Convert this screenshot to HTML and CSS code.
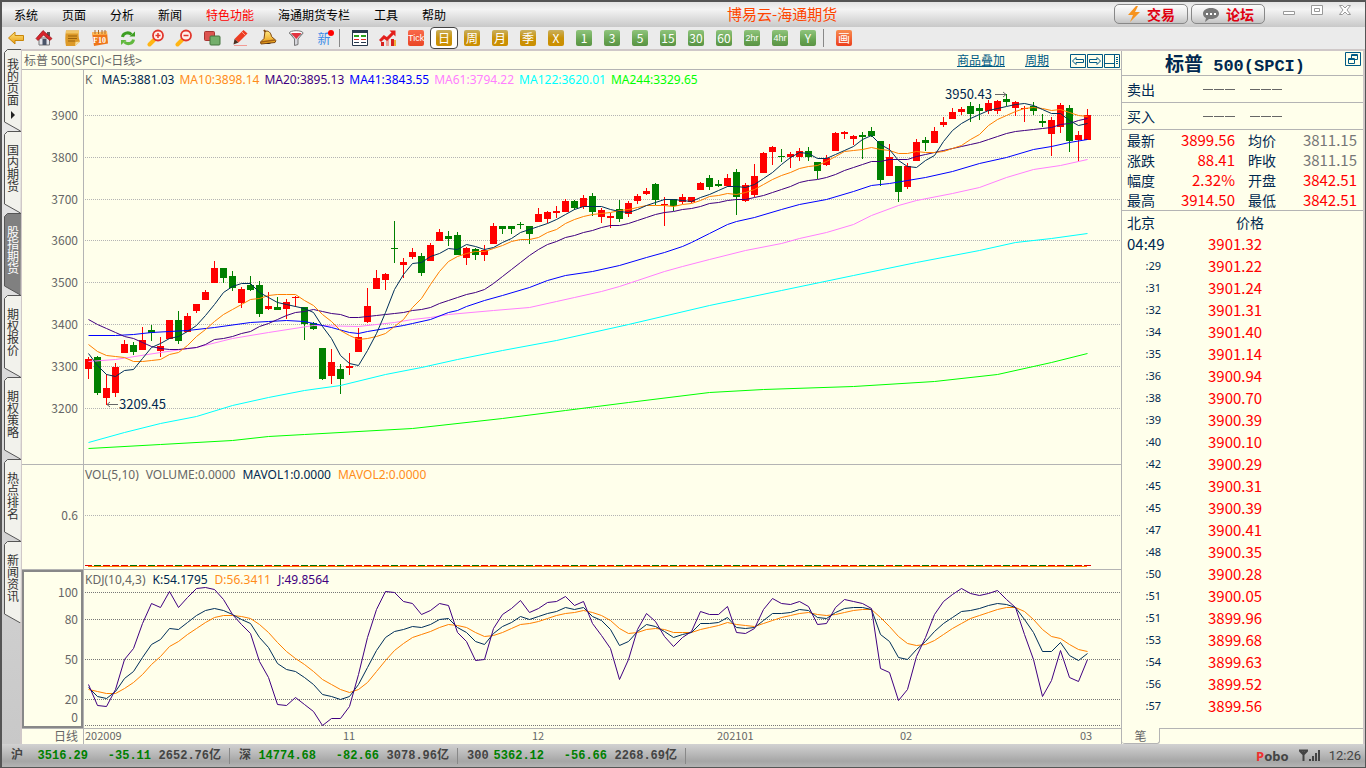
FILE: index.html
```html
<!DOCTYPE html>
<html lang="zh-CN">
<head>
<meta charset="utf-8">
<title>博易云-海通期货</title>
<link rel="stylesheet" href="styles.css">
</head>
<body>
<svg class="defs" aria-hidden="true">
  <defs>
    <linearGradient id="gold" x1="0" y1="0" x2="0" y2="1"><stop offset="0" stop-color="#ffe680"/><stop offset="1" stop-color="#e8990c"/></linearGradient>
    <symbol id="tab" viewBox="0 0 17 82"><path d="M17 .5H3.500L.5 3.500V73L16.500 82"/></symbol>
  </defs>
</svg>
<div class="app">
  <header class="menubar">
    <nav class="menus">
      <button>系统</button><button>页面</button><button>分析</button><button>新闻</button><button class="hot">特色功能</button><button>海通期货专栏</button><button>工具</button><button>帮助</button>
    </nav>
    <h1 class="apptitle">博易云-海通期货</h1>
    <div class="actions">
      <button class="pill"><svg width="14" height="16" viewBox="0 0 14 16"><path d="M9 0 1 9h5l-3 7 10-10H8l3-6z" fill="#f7931e"/></svg>交易</button>
      <button class="pill"><svg width="18" height="15" viewBox="0 0 18 15"><path d="M9 1c5 0 8 2.500 8 5.500S14 12 9 12l-2 0-4 3 1-4C2 10 1 8.500 1 6.500 1 3.500 4 1 9 1z" fill="#777"/><path d="M4 6h2v2H4zM8 6h2v2H8zM12 6h2v2h-2z" fill="#fff"/></svg>论坛</button>
    </div>
    <div class="winctl">
      <button aria-label="最小化"><svg width="14" height="12"><path d="M1.500 7.500h11v3h-11z" fill="#fff" stroke="#999"/></svg></button>
      <button aria-label="最大化"><svg width="14" height="12"><path d="M1.500 1.500h11v9h-11zM4.500 4.500h5v3h-5z" fill="#fff" stroke="#999"/></svg></button>
      <button aria-label="关闭"><svg width="14" height="12"><path d="M1.500 1.500h3L7 4l2.500-2.500h3L9 6l3.500 4.500h-3L7 8l-2.500 2.500h-3L5 6z" fill="#fff" stroke="#999"/></svg></button>
    </div>
  </header>

  <div class="toolbar">
    <button aria-label="后退"><svg width="18" height="18" viewBox="0 0 18 18"><path d="M1.500 9 8 3v3.500h8.500v5H8V15z" fill="url(#gold)" stroke="#c8860a"/></svg></button>
    <button aria-label="首页"><svg width="18" height="18" viewBox="0 0 18 18"><path d="M4 9h10.500v7H4z" fill="#e4e4ea" stroke="#777"/><path d="M7.500 10h4v6h-4z" fill="#4a5468"/><path d="M12 3h3v4h-3z" fill="#555"/><path d="M1 9.500 8 1.500l9 8-2 2L8.500 6 3 11.500z" fill="#d8242c" stroke="#8d1016" stroke-width=".7"/></svg></button>
    <button aria-label="便签"><svg width="18" height="18" viewBox="0 0 18 18"><path d="M3 1.500h13c-1 4 0 9 1 11L12 17H3c-1-4-1-10 0-15.500z" fill="#dd9a28"/><path d="M3 1.500h13v3H3z" fill="#f1c566"/><path d="M5 7h9M5 9.500h9M5 12h7" stroke="#9a620c"/><path d="m12 17 .5-4 4.500-.5z" fill="#f7dc96"/></svg></button>
    <button aria-label="F10"><svg width="18" height="18" viewBox="0 0 18 18"><path d="M1 3.500 16 2.500l1 12L3 17z" fill="#ef7519"/><path d="M1 3.500 16 2.500v3L1.500 6z" fill="#ffbc58"/><path d="M4 1v4M7.500 1v4M11 1v4M14 1v4" stroke="#a76b30"/><text x="2" y="14" class="f10">F10</text></svg></button>
    <button aria-label="刷新"><svg width="18" height="18" viewBox="0 0 18 18"><path d="M3.500 8c.5-4 6-5.500 9-2.500" fill="none" stroke="#3d9e22" stroke-width="3"/><path d="M10.500 7.500H16V2.500z" fill="#3d9e22"/><path d="M14.500 10.500c-.5 4-6 5.500-9 2.500" fill="none" stroke="#62b93f" stroke-width="3"/><path d="M7.500 11H2v5z" fill="#62b93f"/></svg></button>
    <button aria-label="放大"><svg width="18" height="18" viewBox="0 0 18 18"><path d="m7 11-4.500 4.500" stroke="#ffb514" stroke-width="4" stroke-linecap="round"/><circle cx="11" cy="6.500" r="5" fill="#fff0ec" stroke="#e2362c" stroke-width="1.800"/><path d="M8.500 6.500h5M11 4v5" stroke="#e2362c" stroke-width="1.500"/></svg></button>
    <button aria-label="缩小"><svg width="18" height="18" viewBox="0 0 18 18"><path d="m7 11-4.500 4.500" stroke="#ffb514" stroke-width="4" stroke-linecap="round"/><circle cx="11" cy="6.500" r="5" fill="#fff0ec" stroke="#e2362c" stroke-width="1.800"/><path d="M8.500 6.500h5" stroke="#e2362c" stroke-width="1.500"/></svg></button>
    <button aria-label="叠加"><svg width="18" height="18" viewBox="0 0 18 18"><rect x="1.500" y="2.500" width="10" height="9" rx="1" fill="#dc5450" stroke="#a83432"/><rect x="7" y="7" width="10" height="9" rx="1" fill="#73ae6b" stroke="#45753f"/></svg></button>
    <button aria-label="画笔"><svg width="18" height="18" viewBox="0 0 18 18"><path d="M12.500 1 16.500 4.500 7.500 13.500l-4-3.500z" fill="#ed3d23"/><path d="m3.500 10 4 3.500-5 2z" fill="#4a3020"/><path d="m11 3 3.500 3.500" stroke="#ff9d86"/><path d="M3 16.500h13" stroke="#f29a94"/></svg></button>
    <button aria-label="预警"><svg width="18" height="18" viewBox="0 0 18 18"><path d="M6 2.500c3-1.500 6 1 6.500 5l4.500 4-1 2L2 15l-.5-2L5 9.500z" fill="url(#gold)" stroke="#80480e"/><path d="M7 14a3 2.500 0 0 0 5 0z" fill="#3e2a20"/><path d="M6.500 3 5 1" stroke="#80480e" stroke-width="2"/><path d="m2 13 14-2" stroke="#a35f14" stroke-width="1.500"/></svg></button>
    <button aria-label="筛选"><svg width="18" height="18" viewBox="0 0 18 18"><path d="m2.500 4 5 6v6.500l3.500-1V10l5-6z" fill="#d6d6dc" stroke="#777"/><ellipse cx="9.200" cy="4" rx="6.800" ry="2.300" fill="#fff" stroke="#777"/><path d="M4 4h10.500l-5.200 6z" fill="#e43440"/></svg></button>
    <button class="new">新<i></i></button>
    <span class="sep"></span>
    <button aria-label="报价表"><svg width="18" height="18" viewBox="0 0 18 18"><path d="M1.500 1.500h15v15h-15z" fill="#fff" stroke="#26384c"/><path d="M1 1h16v3H1z" fill="#26384c"/><path d="M3 7h5m2 0h5" stroke="#2aa11c" stroke-width="2"/><path d="M3 10.500h5m2 0h5" stroke="#e62626"/><path d="M3 13.500h5m2 0h5" stroke="#26384c"/></svg></button>
    <button aria-label="走势"><svg width="18" height="18" viewBox="0 0 18 18"><path d="M2 13h3v4H2zM12 10h3v7h-3z" fill="#d6221e"/><path d="M7 11h3v6H7z" fill="#eda29a"/><path d="M15 11h2v6h-2z" fill="#ecb13b"/><path d="m1 12 4-4 3 2 6-6" fill="none" stroke="#e3201d" stroke-width="3"/><path d="M10.500 1.500H16.500v6z" fill="#e3201d"/></svg></button>
    <button><b class="ic tick">Tick</b></button>
    <button class="on"><b class="ic gold">日</b></button>
    <button><b class="ic gold">周</b></button>
    <button><b class="ic gold">月</b></button>
    <button><b class="ic gold">季</b></button>
    <button><b class="ic gold">X</b></button>
    <button><b class="ic green">1</b></button>
    <button><b class="ic green">3</b></button>
    <button><b class="ic green">5</b></button>
    <button><b class="ic green">15</b></button>
    <button><b class="ic green">30</b></button>
    <button><b class="ic green">60</b></button>
    <button><b class="ic green hr">2hr</b></button>
    <button><b class="ic green hr">4hr</b></button>
    <button><b class="ic green">Y</b></button>
    <span class="sep"></span>
    <button><b class="ic draw">画</b></button>
  </div>

  <div class="body">
    <nav class="sidetabs">
      <button class="first"><svg><use href="#tab"/></svg><span>我的页面</span><i></i></button>
      <button><svg><use href="#tab"/></svg><span>国内期货</span></button>
      <button class="on"><svg><use href="#tab"/></svg><span>股指期货</span></button>
      <button><svg><use href="#tab"/></svg><span>期权报价</span></button>
      <button><svg><use href="#tab"/></svg><span>期权策略</span></button>
      <button><svg><use href="#tab"/></svg><span>热点排名</span></button>
      <button><svg><use href="#tab"/></svg><span>新闻资讯</span></button>
    </nav>

    <main class="chart">
      <div class="charthead">
        <span>标普 500(SPCI)&lt;日线&gt;</span>
        <div class="links">
          <a href="#overlay">商品叠加</a>
          <a href="#period">周期</a>
          <div class="boxes">
            <button aria-label="向左"><svg width="16" height="14"><path d="M.5.500h15v13H.5zM2.500 7 6 3.500v2h7.500v3H6v2z"/></svg></button>
            <button aria-label="向右"><svg width="16" height="14"><path d="M.5.500h15v13H.5zM13.500 7 10 3.500v2H2.500v3H10v2z"/></svg></button>
            <button aria-label="布局"><svg width="16" height="14"><path d="M.5.500h15v13H.5zM10.500 1v12M1 9.500h9M12 3.500h2M12 5.500h2M12 7.500h2M12 9.500h2"/></svg></button>
          </div>
        </div>
      </div>
      <section class="pane price">
        <svg class="axis" id="axis-price"></svg>
        <div class="plot">
          <svg id="plot-price"></svg>
          <p class="legend"><span class="k">K</span><span class="c5">MA5:3881.03</span><span class="c10">MA10:3898.14</span><span class="c20">MA20:3895.13</span><span class="c41">MA41:3843.55</span><span class="c61">MA61:3794.22</span><span class="c122">MA122:3620.01</span><span class="c244">MA244:3329.65</span></p>
        </div>
      </section>
      <section class="pane vol">
        <svg class="axis" id="axis-vol"></svg>
        <div class="plot">
          <svg id="plot-vol"></svg>
          <p class="legend"><span>VOL(5,10)</span><span>VOLUME:0.0000</span><span class="c5">MAVOL1:0.0000</span><span class="c10">MAVOL2:0.0000</span></p>
        </div>
      </section>
      <section class="pane kdj">
        <svg class="axis" id="axis-kdj"></svg>
        <div class="plot">
          <svg id="plot-kdj"></svg>
          <p class="legend"><span>KDJ(10,4,3)</span><span class="c5">K:54.1795</span><span class="c10">D:56.3411</span><span class="c20">J:49.8564</span></p>
        </div>
      </section>
      <div class="dates">
        <span>日线</span>
        <svg id="plot-dates"></svg>
      </div>
    </main>

    <aside class="quote">
      <div class="qtitle"><h2>标普<span>&nbsp;500(SPCI)</span></h2>
        <button aria-label="弹出窗口"><svg width="16" height="14"><path d="M.5.500h15v13H.5zM6.500 2.500h6v5h-6zM7 3.500h5M3.500 6.500h6v5h-6zM4 7.500h5"/></svg></button></div>
      <div class="bidask"><span>卖出</span><i></i><i></i></div>
      <div class="bidask"><span>买入</span><i></i><i></i></div>
      <table class="stats">
        <tr><th>最新</th><td class="up">3899.56</td><th>均价</th><td>3811.15</td></tr>
        <tr><th>涨跌</th><td class="up">88.41</td><th>昨收</th><td>3811.15</td></tr>
        <tr><th>幅度</th><td class="up">2.32%</td><th>开盘</th><td class="up">3842.51</td></tr>
        <tr><th>最高</th><td class="up">3914.50</td><th>最低</th><td class="up">3842.51</td></tr>
      </table>
      <table class="ticks">
        <thead><tr><th>北京</th><th>价格</th></tr></thead>
        <tbody>
        <tr><td class="full">04:49</td><td>3901.32</td></tr>
        <tr><td>:29</td><td>3901.22</td></tr>
        <tr><td>:31</td><td>3901.24</td></tr>
        <tr><td>:32</td><td>3901.31</td></tr>
        <tr><td>:34</td><td>3901.40</td></tr>
        <tr><td>:35</td><td>3901.14</td></tr>
        <tr><td>:36</td><td>3900.94</td></tr>
        <tr><td>:38</td><td>3900.70</td></tr>
        <tr><td>:39</td><td>3900.39</td></tr>
        <tr><td>:40</td><td>3900.10</td></tr>
        <tr><td>:42</td><td>3900.29</td></tr>
        <tr><td>:45</td><td>3900.31</td></tr>
        <tr><td>:45</td><td>3900.39</td></tr>
        <tr><td>:47</td><td>3900.41</td></tr>
        <tr><td>:48</td><td>3900.35</td></tr>
        <tr><td>:50</td><td>3900.28</td></tr>
        <tr><td>:51</td><td>3900.05</td></tr>
        <tr><td>:51</td><td>3899.96</td></tr>
        <tr><td>:53</td><td>3899.68</td></tr>
        <tr><td>:54</td><td>3899.63</td></tr>
        <tr><td>:56</td><td>3899.52</td></tr>
        <tr><td>:57</td><td>3899.56</td></tr>
        </tbody>
      </table>
      <div class="qtabs"><button>笔</button><div></div></div>
    </aside>
  </div>

  <footer class="status">
    <div class="idx"><span>沪</span><b>3516.29</b><b class="chg">-35.11</b><span class="amt">2652.76亿</span></div>
    <div class="idx"><span>深</span><b>14774.68</b><b class="chg">-82.66</b><span class="amt">3078.96亿</span></div>
    <div class="idx"><span>300</span><b>5362.12</b><b class="chg">-56.66</b><span class="amt">2268.69亿</span></div>
    <div class="right">
      <span class="brand"><em>P</em>obo</span>
      <svg width="22" height="14" viewBox="0 0 22 14"><path d="M1 1.500h9M2 2l3.500 3.500L9 2M5.500 2v10" fill="none" stroke="#444" stroke-width="2"/><path d="M11 10h2v2h-2zM14 7h2v5h-2zM17 4h2v8h-2zM20 1h2v11h-2z" fill="#444"/></svg>
      <time>12:26</time>
    </div>
  </footer>
</div>
<script src="chart.js"></script>
</body>
</html>
```

FILE: styles.css
```css
* { box-sizing: border-box; }
body {
  margin: 0;
  font: 12px/16px "Noto Sans CJK SC", sans-serif;
  color: #666;
  background: #ebebeb;
}
button { border: 0; padding: 0; background: none; font: inherit; color: inherit; }
p, h1, h2 { margin: 0; font-weight: normal; }
i, em { font-style: normal; }
svg { display: block; }
.defs { position: absolute; width: 0; height: 0; }

.app {
  display: flex;
  flex-direction: column;
  min-height: 100vh;
  border: 2px solid #555;
  border-width: 2px 1px 1px 2px;
}

/* menu bar */
.menubar {
  display: flex;
  height: 25px;
  background: linear-gradient(#e4e4e4, #f4f4f4 30%, #c8c8c8);
}
.menus { display: flex; color: #000; }
.menus button { padding: 0 12px; }
.menus .hot { color: #f00; }
.apptitle { flex: 1; padding-right: 8px; text-align: center; font-size: 15px; line-height: 24px; color: #ff4500; }
.actions { display: flex; gap: 3px; padding-top: 2px; }
.pill {
  display: flex;
  align-items: center;
  justify-content: center;
  gap: 6px;
  width: 74px;
  height: 20px;
  border: 1px solid #888;
  border-radius: 5px;
  background: linear-gradient(#fdfdfd, #e8e8e8 50%, #c4c4c4);
  font-size: 14px;
  line-height: 18px;
  font-weight: bold;
  color: #e00010;
}
.winctl { display: flex; gap: 14px; padding: 2px 13px 0 17px; align-items: flex-start; }

/* toolbar */
.toolbar {
  display: flex;
  height: 24px;
  background: #ebebeb;
  border-bottom: 2px solid #cfc8c8;
}
.toolbar button { display: flex; align-items: center; justify-content: center; width: 28px; height: 22px; }
.toolbar button.on { background: #fff; border: 1px solid #444; border-radius: 4px; }
.sep { width: 7px; margin: 2px 0 2px 1px; border-left: 1px solid #888; }
.toolbar .new { position: relative; font-size: 13px; color: #3d8de8; }
.new i { position: absolute; right: 4px; top: 3px; width: 6px; height: 6px; border-radius: 3px; background: #f00; }
.ic {
  width: 16px;
  height: 16px;
  border-radius: 2px;
  overflow: hidden;
  font-size: 12px;
  line-height: 16px;
  font-weight: normal;
  text-align: center;
  color: #fff;
}
.ic.gold { background: linear-gradient(#c9b060, #c99208 50%, #cc8f00); }
.ic.green { background: linear-gradient(#8fc47c, #68a552 60%, #5a9344); font-size: 12px; }
.ic.green.hr { font: 9px/16px "Liberation Sans", sans-serif; }
.ic.tick { background: linear-gradient(#f9694a, #ea4524); font: 9px/16px "Liberation Sans", sans-serif; }
.ic.draw { background: linear-gradient(#f88d50, #ec3f1c); }

/* body */
.body { flex: 1; display: flex; }
.sidetabs { flex: none; width: 18px; padding-left: 2px; margin-top: -2px; background: linear-gradient(#ebebeb, #c8c8c8); }
.sidetabs button {
  position: relative;
  display: flex;
  flex-direction: column;
  align-items: center;
  width: 16px;
  height: 82px;
  padding: 13px 0 0 2px;
  color: #333;
}
.sidetabs .first { padding-top: 9px; }
.sidetabs svg { position: absolute; left: 0; top: 0; width: 17px; height: 82px; fill: #f2f2ec; stroke: #555; }
.sidetabs span { position: relative; width: 12px; line-height: 12px; word-break: break-all; }
.sidetabs i { position: relative; margin-top: 5px; border: 4px solid transparent; border-left-color: #222; border-right: 0; }
.sidetabs .on { color: #fff; }
.sidetabs .on svg { fill: #808080; }

.chart {
  flex: 1;
  min-width: 0;
  display: flex;
  flex-direction: column;
  background: #ffffeb;
  border-left: 2px solid #cfc8c8;
  border-right: 1px solid #b4b4b4;
}
.charthead {
  display: flex;
  justify-content: space-between;
  height: 19px;
  padding: 0 1px 0 2px;
  line-height: 18px;
  border-bottom: 1px solid #b4b4b4;
}
.links { display: flex; gap: 20px; }
.links a { color: #005a84; }
.boxes { display: flex; gap: 1px; margin-left: 1px; padding-top: 1px; }
.boxes svg, .qtitle svg { fill: none; stroke: #005a84; }

.pane { display: flex; min-height: 0; overflow: hidden; border-bottom: 1px solid #b4b4b4; }
.price { flex: 1 1 0; }
.vol { flex: none; height: 105px; }
.kdj { flex: none; height: 159px; }
.axis { flex: none; width: 61px; }
.vol .axis, .kdj .axis { height: auto; }
.kdj .axis { border: 2px solid #888; }
.plot { position: relative; flex: 1; min-width: 0; border-left: 1px solid #b4b4b4; }
.plot svg { position: absolute; width: 100%; height: 100%; }
.legend { position: relative; display: flex; gap: 5px; padding: 2px 1px; font: 12px/16px "Noto Sans", sans-serif; }
.legend .k { margin-right: 4px; }
.vol .legend, .kdj .legend { gap: 7px; }
.c5 { color: #002850; }
.c10 { color: #ff8c1a; }
.c20 { color: #400080; }
.c41 { color: #00f; }
.c61 { color: #ff80ff; }
.c122 { color: #0ff; }
.c244 { color: #0f0; }
svg text { font-size: 12px; fill: #666; }
svg text.f10 { font: bold 8px "Liberation Serif", serif; fill: #fff; }
svg text.mark { font-size: 13px; fill: #002850; }
svg text.date { font-size: 11px; }
.dates { display: flex; height: 15px; line-height: 14px; }
.dates span { width: 62px; padding-right: 5px; text-align: right; border-right: 1px solid #b4b4b4; }
.dates svg { flex: 1; min-width: 0; height: 15px; overflow: visible; }

/* quote panel */
.quote {
  flex: none;
  width: 243px;
  display: flex;
  flex-direction: column;
  background: #ffffeb;
  border-right: 2px solid #cfc8c8;
  color: #002850;
  font-size: 14px;
}
.qtitle { display: flex; align-items: flex-start; height: 25px; border-bottom: 1px solid #b4b4b4; padding-right: 2px; }
.qtitle h2 { flex: 1; padding-left: 3px; text-align: center; font-size: 19px; line-height: 23px; font-weight: bold; color: #002850; }
.qtitle h2 span { font: bold 17px/23px "Liberation Mono", monospace; }
.qtitle button { padding-top: 1px; }
.bidask { display: flex; align-items: center; height: 27px; padding-left: 5px; border-bottom: 1px solid #b4b4b4; }
.bidask span { width: 76px; }
.bidask i { width: 32px; height: 1px; margin-right: 15px; background: repeating-linear-gradient(90deg, #666 0 10px, transparent 10px 11px); }
table { border-collapse: collapse; table-layout: fixed; }
th, td { padding: 0; font-weight: normal; text-align: left; }
.stats { width: 230px; margin-left: 5px; color: #777; }
.stats tr { height: 20px; }
.stats th { width: 28px; color: #002850; }
.stats td { text-align: right; font-size: 15px; }
.stats td:nth-child(2) { width: 80px; }
.stats th:nth-child(3) { width: 41px; padding-left: 13px; }
.stats .up, .ticks td { color: #f00; }
.ticks { width: 100%; border-top: 1px solid #b4b4b4; margin-bottom: 10px; }
.ticks tr { height: 22px; }
.ticks th { padding-left: 5px; color: #002850; }
.ticks th:first-child { width: 56px; }
.ticks th:last-child { padding-left: 58px; }
.ticks td { padding-left: 30px; font-size: 15px; }
.ticks td:first-child { padding: 0 17px 0 0; text-align: right; font: 11px/16px "Noto Sans", sans-serif; color: #002850; }
.ticks td.full:first-child { padding: 0 0 0 5px; text-align: left; font: 15px/16px "Noto Sans CJK SC", sans-serif; }
.qtabs { display: flex; height: 16px; margin-top: auto; color: #666; font-size: 12px; }
.qtabs button { width: 38px; line-height: 14px; border: 1px solid #b4b4b4; border-width: 0 1px 1px 0; border-radius: 0 0 3px 3px; }
.qtabs div { flex: 1; border-top: 1px solid #b4b4b4; }

/* status bar */
.status {
  display: flex;
  align-items: center;
  height: 23px;
  padding-right: 4px;
  background: linear-gradient(#d2d2d2, #a6a6a6 75%, #b4b4b4);
  font: bold 12px/16px "Liberation Mono", "Noto Sans CJK SC", monospace;
  color: #444;
}
.idx { display: flex; width: 228px; padding: 0 8px 0 9px; border-right: 1px solid #888; }
.idx b { flex: 1; text-align: right; color: #008000; }
.idx .chg { flex: none; width: 63px; }
.idx .amt { width: 70px; text-align: right; }
.right { display: flex; align-items: center; gap: 9px; margin-left: auto; font: 13px/16px Roboto, sans-serif; }
.brand { font: bold 13px/16px "Noto Sans", sans-serif; }
.brand em { color: #f03030; }
```

FILE: chart.js
```js
// Each bar: direction (1 up, 0 down), high, body top, body bottom, low
const bars = [
[1,357,359,369,379],[0,356,357,393,395],[1,374,388,398,405],[1,363,367,393,397],[1,340,344,353,353],
[0,342,345,352,355],[1,327,340,350,350],[0,325,330,333,341],[1,337,346,351,357],[1,320,320,339,339],
[0,311,320,341,344],[1,313,316,332,332],[1,304,304,311,313],[1,290,292,300,300],[1,261,268,283,283],
[0,268,268,278,283],[0,271,276,288,291],[1,287,289,303,308],[0,276,285,290,291],[0,281,285,314,317],
[1,292,306,309,310],[0,297,307,310,310],[1,299,302,309,319],[1,296,297,298,307],[0,307,307,324,340],
[0,322,323,329,330],[0,348,348,379,380],[1,349,362,376,384],[0,364,369,379,394],[1,353,366,368,375],
[1,328,337,352,352],[1,288,306,322,323],[1,270,278,289,289],[1,273,274,280,290],[0,221,248,249,263],
[1,258,262,265,278],[1,248,252,257,259],[0,253,256,273,276],[1,243,245,261,261],[1,229,232,241,241],
[0,231,236,239,246],[0,232,235,255,255],[1,247,248,258,265],[0,248,249,255,260],[1,245,250,255,261],
[1,223,226,244,244],[0,226,226,229,234],[0,226,226,229,234],[0,222,224,225,229],[0,226,226,234,244],
[1,208,214,222,222],[1,211,212,219,223],[1,206,211,213,218],[1,199,201,212,212],[0,200,201,208,210],
[1,195,198,207,209],[0,193,196,212,216],[1,208,210,217,223],[1,213,216,218,228],[0,200,209,219,222],
[1,201,203,214,217],[1,194,196,201,204],[1,188,191,194,195],[0,183,184,200,205],[1,197,204,205,226],
[0,199,199,206,211],[1,194,197,202,204],[1,197,197,202,203],[1,182,183,190,190],[0,175,178,187,190],
[0,180,184,186,187],[1,174,178,186,187],[0,169,172,197,215],[1,183,185,201,202],[1,164,176,195,197],
[1,152,153,173,173],[1,146,147,152,165],[0,149,156,157,162],[1,152,154,157,168],[1,148,151,157,161],
[0,147,151,157,161],[0,162,162,171,179],[1,155,158,165,166],[1,132,133,151,151],[1,131,132,134,139],
[1,135,136,139,145],[0,132,135,137,159],[0,127,131,136,137],[0,141,141,180,186],[1,144,157,176,176],
[0,166,166,192,202],[1,163,166,187,189],[1,139,142,161,161],[0,137,140,143,151],[1,127,131,143,143],
[1,117,122,125,127],[1,108,112,119,119],[1,107,109,112,115],[0,102,106,114,122],[0,104,108,111,120],
[1,100,103,111,114],[1,100,101,111,114],[0,94,99,102,106],[1,101,102,108,116],[1,106,108,109,122],
[0,102,106,111,115],[0,114,121,123,127],[1,117,120,134,156],[1,103,105,127,133],[0,105,108,141,152],
[1,131,135,140,161],[1,109,115,140,140]];

const STEP = 9, X0 = 88;
const NAVY = '#002f5a', ORANGE = '#ff8000', PURPLE = '#400080';
const cx = i => X0 + STEP * i;
const rect = (x, y, w, h, c) => `<rect x="${x}" y="${y}" width="${w}" height="${h}" fill="${c}"/>`;
const poly = (pts, c) => `<polyline points="${pts.map(p => (cx(p[0]) + .5) + ',' + (p[1] + .5)).join(' ')}" fill="none" stroke="${c}"/>`;
const grid = (ys, c) => ys.map(y => `<line x1="85" x2="200%" y1="${y + .5}" y2="${y + .5}" stroke="${c}" stroke-dasharray="1 1"/>`).join('');
const put = (id, dx, dy, s) => { document.getElementById(id).innerHTML = `<g transform="translate(${-dx} ${-dy})">${s}</g>`; };
const labels = (rows, x) => rows.map(r => `<text x="${x}" y="${r[1] + 5}" text-anchor="end">${r[0]}</text>`).join('');

// Moving averages: opening values, then the mean of the last n closes
const close = bars.map(b => b[0] ? b[2] : b[3]);
function average(n, head) {
  return close.map((v, i) => {
    if (i < head.length) return [i, head[i]];
    let sum = 0;
    for (let k = i - n + 1; k <= i; k++) sum += close[k];
    return [i, Math.round(sum / n)];
  });
}
const ma5 = average(5, [353,365,374,376]);
const ma10 = average(10, [344,351,355,356,357,361,361,360,359]);
const ma20 = average(20, [319,324,328,332,336,338,342,346,348,349,349,348,347,344,339,338,336,333,331]);
const ma41 = [[0,335],[3,335],[5,334],[7,332],[9,331],[11,330],[14,327],[18,322],[20,321],[22,320],[24,321],[25,323],[27,327],[29,332],[30,333],[31,331],[33,328],[35,325],[36,323],[38,319],[40,312],[41,310],[42,306],[44,300],[46,295],[49,287],[51,280],[53,275],[56,271],[59,265],[62,257],[64,252],[66,246],[67,242],[69,233],[71,224],[72,221],[74,217],[77,209],[79,204],[82,199],[85,191],[87,185],[89,183],[91,180],[93,177],[96,171],[99,163],[102,157],[105,149],[107,146],[109,142],[111,139]];
const ma61 = [[0,361],[3,359],[8,352],[12,347],[16,338],[20,332],[25,325],[30,326],[34,322],[36,319],[38,317],[40,314],[45,310],[49,307],[52,301],[54,297],[57,291],[59,286],[61,280],[64,271],[66,266],[69,259],[73,250],[77,243],[79,238],[82,232],[85,224],[87,215],[90,205],[92,200],[96,193],[99,187],[102,177],[105,169],[108,165],[111,159]];
const ma122 = [[0,442],[4,432],[8,423],[12,416],[16,405],[20,397],[24,390],[28,385],[33,374],[37,367],[41,359],[46,350],[52,340],[60,324],[69,305],[77,290],[85,275],[92,262],[99,250],[103,242],[107,238],[111,233]];
const ma244 = [[0,448],[8,444],[16,440],[20,436],[24,434],[36,428],[46,418],[53,410],[60,402],[69,392],[75,389],[85,386],[94,381],[101,374],[107,362],[111,353]];

let s = grid([115,157,199,240,282,324,366,408], '#b4b4b4');
bars.forEach((b, i) => {
  const c = b[0] ? '#f00' : '#008000';
  s += rect(cx(i), b[1], 1, b[4] - b[1], c) + rect(cx(i) - 3, b[2], 7, b[3] - b[2], c);
});
s += poly(ma244, '#0f0') + poly(ma122, '#0ff') + poly(ma61, '#ff80ff') + poly(ma41, '#00f') + poly(ma20, PURPLE) + poly(ma10, ORANGE) + poly(ma5, NAVY);
s += '<text class="mark" x="119" y="409">3209.45</text><path d="M107 404.500h11M110 402l-3 2.500 3 2.500" fill="none" stroke="#666"/>';
s += '<text class="mark" x="945" y="99">3950.43</text><path d="M995 94.500h11M1003 92l3 2.500-3 2.500" fill="none" stroke="#666"/>';
put('plot-price', 84, 70, s);
put('axis-price', 22, 70, labels([[3900,115],[3800,157],[3700,199],[3600,240],[3500,282],[3400,324],[3300,366],[3200,408]], 78));

s = grid([515], '#b4b4b4') + rect(cx(0), 566, STEP * 111, 1, ORANGE);
bars.forEach((b, i) => { s += rect(cx(i) - 3, 565, 7, 1, b[0] ? '#e00000' : '#007000'); });
put('plot-vol', 84, 465, s);
put('axis-vol', 22, 465, labels([['0.6', 515]], 78));

// KDJ values are stored in thirds of a unit below the pane origin
const K = [382,408,415,393,356,333,293,254,238,205,208,187,166,151,145,152,164,178,190,232,263,310,328,333,353,373,403,409,417,409,373,322,271,233,214,208,199,202,193,178,175,202,217,245,253,221,199,187,169,178,169,160,154,142,148,142,168,182,208,257,244,214,193,199,214,233,223,216,190,190,187,172,202,205,202,180,160,160,157,148,151,172,175,157,145,142,142,147,222,245,292,298,268,244,214,189,172,154,151,145,136,130,132,143,177,218,274,274,247,287,301,280];
const D = [388,394,400,401,385,367,343,313,289,259,244,223,205,187,172,167,167,169,175,194,217,247,274,295,313,335,358,373,388,397,388,367,333,301,270,250,232,223,214,202,193,196,202,217,229,227,217,205,193,190,184,175,166,160,157,151,157,166,182,206,220,217,208,205,208,217,217,216,208,202,196,187,193,196,199,190,181,172,166,160,157,162,166,163,157,151,148,148,173,198,230,250,256,253,241,223,205,190,175,166,157,148,142,143,155,177,208,229,235,253,268,274];
const J = [373,436,439,388,298,265,190,130,142,95,142,113,85,83,89,119,163,193,220,304,352,433,436,412,433,455,496,475,475,439,343,232,148,94,97,124,130,163,151,130,136,217,244,301,298,205,163,145,121,157,145,127,124,109,136,124,190,225,265,358,298,208,160,185,229,260,232,214,154,163,163,139,217,220,206,148,115,130,133,124,139,193,190,142,118,124,130,145,325,338,421,388,289,232,163,125,104,85,100,106,100,91,119,142,223,298,409,361,271,352,364,298];
const kdj = v => v.map((y, i) => [i, Math.round(560 + y / 3 - .5)]);
put('plot-kdj', 84, 570, grid([592,619,659,699,725], '#777') + poly(kdj(D), ORANGE) + poly(kdj(K), NAVY) + poly(kdj(J), PURPLE));
put('axis-kdj', 24, 572, labels([[100,592],[80,619],[50,659],[20,699],[0,717]], 78));

put('plot-dates', 84, 729, [['202009',85],['11',343],['12',532],['202101',717],['02',900],['03',1080]].map(d => `<text class="date" x="${d[1]}" y="740">${d[0]}</text>`).join(''));
```
